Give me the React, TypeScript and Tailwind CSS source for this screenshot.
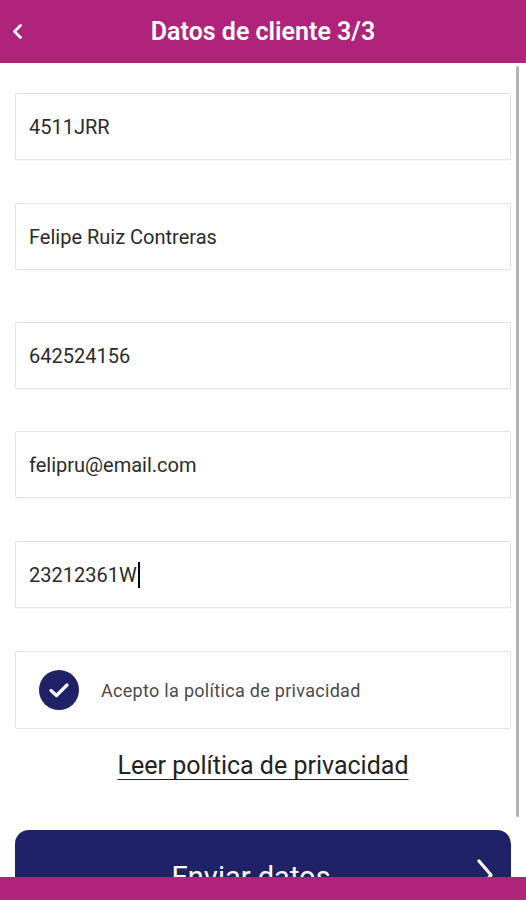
const fields = [
    { value: '4511JRR', mt: 'mt-[30px]' },
    { value: 'Felipe Ruiz Contreras', mt: 'mt-[43px]' },
    { value: '642524156', mt: 'mt-[52px]' },
    { value: 'felipru@email.com', mt: 'mt-[42px]' },
    { value: '23212361W', mt: 'mt-[43px]', focused: true },
];

const Field = ({ value, mt, focused }: { value: string; mt: string; focused?: boolean }) => (
    <div className={`${mt} h-[67px] border border-[#e4e4e4] rounded-[2px] bg-white flex items-center px-[13px] shadow-[0_1px_1px_rgba(0,0,0,0.04)]`}>
        <span className="text-[20px] text-[#2b2b2b]">{value}</span>
        {focused && <span className="w-[2px] h-[26px] bg-black ml-[1px]" />}
    </div>
);

export default function App() {
    return (
        <div className="w-[526px] h-[900px] flex flex-col bg-white overflow-hidden font-['Roboto',sans-serif]">
            <header className="h-[63px] bg-[#b0237a] relative flex items-center justify-center shrink-0">
                <svg className="absolute left-[11px] top-[23px]" width="13" height="17" viewBox="0 0 13 17" fill="none">
                    <path d="M9.5 2.5 L3.5 8.5 L9.5 14.5" stroke="white" strokeWidth="2.8" strokeLinecap="round" strokeLinejoin="round" />
                </svg>
                <h1 className="text-white text-[25px] font-semibold">Datos de cliente 3/3</h1>
            </header>

            <main className="flex-1 relative overflow-hidden px-[15px]">
                <div className="absolute right-[7px] top-[3px] w-[3px] h-[751px] bg-[#b5b5b5] rounded-full" />
                {fields.map((f) => (
                    <Field key={f.value} {...f} />
                ))}

                <div className="mt-[43px] h-[78px] border border-[#e4e4e4] rounded-[2px] flex items-center pl-[23px]">
                    <span className="w-[40px] h-[40px] rounded-full bg-[#1f2266] flex items-center justify-center">
                        <svg width="22" height="16" viewBox="0 0 22 16" fill="none">
                            <path d="M3 8.5 L8.5 13.5 L19 3" stroke="white" strokeWidth="3.2" strokeLinecap="round" strokeLinejoin="round" />
                        </svg>
                    </span>
                    <span className="ml-[22px] text-[18px] tracking-[0.3px] text-[#4a4a4a]">Acepto la política de privacidad</span>
                </div>

                <div className="mt-[18px] text-center">
                    <span className="text-[25px] text-[#222] underline underline-offset-[5px] decoration-1">Leer política de privacidad</span>
                </div>

                <button className="mt-[45px] w-full h-[96px] rounded-[14px] bg-[#1f2266] relative flex items-center justify-center pr-[24px]">
                    <span className="text-white text-[29px]">Enviar datos</span>
                    <svg className="absolute right-[17px] top-[28px]" width="18" height="34" viewBox="0 0 18 34" fill="none">
                        <path d="M3 3 L15 17 L3 31" stroke="white" strokeWidth="3.2" strokeLinecap="round" strokeLinejoin="round" />
                    </svg>
                </button>
            </main>

            <footer className="h-[23px] bg-[#b0237a] shrink-0" />
        </div>
    );
}
